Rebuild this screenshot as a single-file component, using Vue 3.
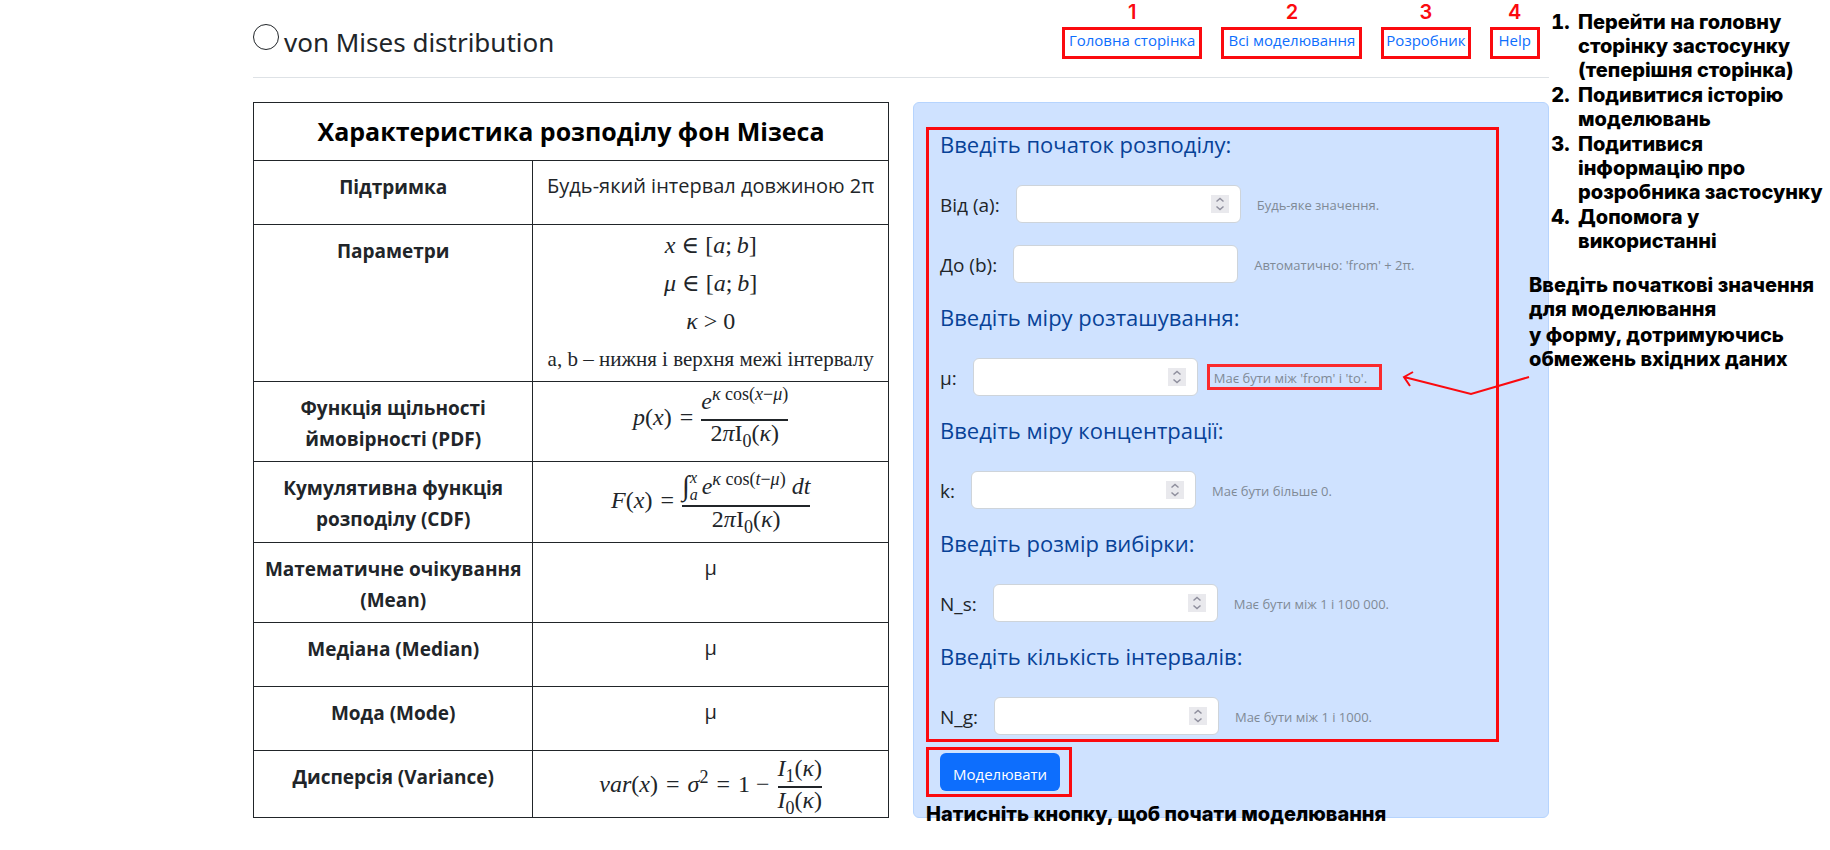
<script setup>
import { reactive } from 'vue'

const links = [
  { text: 'Головна сторінка', kind: 'regular' },
  { text: 'Всі моделювання', kind: 'regular' },
  { text: 'Розробник', kind: 'narrow' },
  { text: 'Help', kind: 'roomy' },
]

const groups = [
  {
    title: 'Введіть початок розподілу:',
    fields: [
      { id: 'from', label: 'Від (a):', hint: 'Будь-яке значення.' },
      { id: 'to', label: 'До (b):', hint: "Автоматично: 'from' + 2π.", readonly: true },
    ],
  },
  {
    title: 'Введіть міру розташування:',
    fields: [{ id: 'mu', label: 'μ:', hint: "Має бути між 'from' і 'to'.", marked: true }],
  },
  {
    title: 'Введіть міру концентрації:',
    fields: [{ id: 'kappa', label: 'k:', hint: 'Має бути більше 0.' }],
  },
  {
    title: 'Введіть розмір вибірки:',
    fields: [{ id: 'samples', label: 'N_s:', hint: 'Має бути між 1 і 100 000.' }],
  },
  {
    title: 'Введіть кількість інтервалів:',
    fields: [{ id: 'bins', label: 'N_g:', hint: 'Має бути між 1 і 1000.' }],
  },
]

const values = reactive({ from: '', to: '', mu: '', kappa: '', samples: '', bins: '' })

const navNotes = [
  'Перейти на головну сторінку застосунку (теперішня сторінка)',
  'Подивитися історію моделювань',
  'Подитивися інформацію про розробника застосунку',
  'Допомога у використанні',
]
</script>

<template>
  <div class="page">
    <div class="container">
      <header class="header">
        <div class="brand">
          <span class="logo"></span>
          <h1>von Mises distribution</h1>
        </div>
        <nav class="nav">
          <a v-for="(link, i) in links" :key="link.text" href="#" :class="link.kind">
            {{ link.text }}<span class="number">{{ i + 1 }}</span>
          </a>
        </nav>
      </header>

      <main class="columns">
        <table class="facts">
          <colgroup>
            <col class="names" />
            <col />
          </colgroup>
          <thead>
            <tr><th colspan="2">Характеристика розподілу фон Мізеса</th></tr>
          </thead>
          <tbody>
            <tr>
              <th scope="row">Підтримка</th>
              <td>Будь-який інтервал довжиною 2π</td>
            </tr>
            <tr>
              <th scope="row">Параметри</th>
              <td class="params">
                <p><i>x</i> ∈ [<i>a</i>;&thinsp;<i>b</i>]</p>
                <p><i>μ</i> ∈ [<i>a</i>;&thinsp;<i>b</i>]</p>
                <p><i>κ</i> &gt; 0</p>
                <p class="plain">a, b – нижня і верхня межі інтервалу</p>
              </td>
            </tr>
            <tr>
              <th scope="row">Функція щільності ймовірності (PDF)</th>
              <td class="math">
                <div class="formula">
                  <span><i>p</i>(<i>x</i>)</span>
                  <span>=</span>
                  <span class="fraction">
                    <span class="top"><i>e</i><sup><i>κ</i> cos(<i>x</i>−<i>μ</i>)</sup></span>
                    <span class="bottom">2<i>π</i>I<sub>0</sub>(<i>κ</i>)</span>
                  </span>
                </div>
              </td>
            </tr>
            <tr>
              <th scope="row">Кумулятивна функція розподілу (CDF)</th>
              <td class="math">
                <div class="formula">
                  <span><i>F</i>(<i>x</i>)</span>
                  <span>=</span>
                  <span class="fraction">
                    <span class="top integral">
                      <span class="sign">∫</span>
                      <span class="limits"><i>x</i><i>a</i></span>
                      <span><i>e</i><sup><i>κ</i> cos(<i>t</i>−<i>μ</i>)</sup> <i>dt</i></span>
                    </span>
                    <span class="bottom">2<i>π</i>I<sub>0</sub>(<i>κ</i>)</span>
                  </span>
                </div>
              </td>
            </tr>
            <tr>
              <th scope="row">Математичне очікування (Mean)</th>
              <td>μ</td>
            </tr>
            <tr>
              <th scope="row">Медіана (Median)</th>
              <td>μ</td>
            </tr>
            <tr>
              <th scope="row">Мода (Mode)</th>
              <td>μ</td>
            </tr>
            <tr>
              <th scope="row">Дисперсія (Variance)</th>
              <td class="math variance">
                <div class="formula">
                  <span><i>var</i>(<i>x</i>)</span>
                  <span>=</span>
                  <span><i>σ</i><sup>2</sup></span>
                  <span>=</span>
                  <span>1 −</span>
                  <span class="fraction">
                    <span class="top"><i>I</i><sub>1</sub>(<i>κ</i>)</span>
                    <span class="bottom"><i>I</i><sub>0</sub>(<i>κ</i>)</span>
                  </span>
                </div>
              </td>
            </tr>
          </tbody>
        </table>

        <form class="panel" @submit.prevent>
          <div class="outline inputs">
            <section v-for="group in groups" :key="group.title" class="group">
              <h2>{{ group.title }}</h2>
              <div v-for="field in group.fields" :key="field.id" class="row">
                <label :for="field.id">{{ field.label }}</label>
                <div class="control">
                  <input
                    :id="field.id"
                    v-model="values[field.id]"
                    :type="field.readonly ? 'text' : 'number'"
                    :readonly="field.readonly"
                  />
                  <svg v-if="!field.readonly" class="spinner" viewBox="0 0 18 18">
                    <rect width="18" height="18" fill="#e9e9ed" />
                    <path d="M5.5 6.5 9 3.5l3.5 3M5.5 11.5 9 14.5l3.5-3" fill="none" stroke="#8f8f9d" stroke-width="1.5" />
                  </svg>
                </div>
                <span class="hint" :class="{ marked: field.marked }">{{ field.hint }}</span>
              </div>
            </section>
          </div>
          <div class="outline submit">
            <button type="submit">Моделювати</button>
          </div>
          <p class="note submit-note">Натисніть кнопку, щоб почати моделювання</p>
        </form>
      </main>

      <ol class="note nav-note">
        <li v-for="text in navNotes" :key="text">{{ text }}</li>
      </ol>
      <div class="note form-note">
        <p>Введіть початкові значення для моделювання</p>
        <p>у форму, дотримуючись обмежень вхідних даних</p>
      </div>
      <svg class="arrow" viewBox="0 0 130 28">
        <path d="M129 7 71 24 4 7M13 2 4 7l6 9" fill="none" stroke="#fb0a0f" stroke-width="2" />
      </svg>
    </div>
  </div>
</template>

<style>
body {
  margin: 0;
  background: #fff;
}
</style>

<style scoped>
.page {
  padding: 0 28px 32px 0;
  color: #212529;
  font-family: "Open Sans", "Noto Sans", sans-serif;
  font-size: 20px;
}
.page * {
  box-sizing: border-box;
}
.container {
  position: relative;
  max-width: 1296px;
  margin: 0 auto;
}
h1,
h2,
p {
  margin: 0;
}

.header {
  display: flex;
  justify-content: space-between;
  align-items: flex-start;
  height: 78px;
  padding-top: 24px;
  border-bottom: 1px solid #dee2e6;
}
.brand {
  display: flex;
  align-items: flex-start;
  gap: 5px;
}
.logo {
  width: 26px;
  height: 26px;
  border: 1px solid #212529;
  border-radius: 50%;
}
h1 {
  font-family: "Noto Sans", sans-serif;
  font-size: 26px;
  font-weight: 400;
  line-height: 36px;
}
.nav {
  display: flex;
  gap: 19px;
  margin: 3px 9px 0 0;
}
.nav a {
  position: relative;
  height: 32px;
  padding: 0 4px;
  border: 3px solid #fb0a0f;
  color: #0d6efd;
  font-size: 15px;
  line-height: 21px;
  text-decoration: none;
}
.nav .narrow {
  padding: 0 2px;
}
.nav .roomy {
  padding: 0 6px;
}
.number {
  position: absolute;
  left: 0;
  right: 0;
  top: -30px;
  color: #fb0a0f;
  font: 600 20px/24px Inter, sans-serif;
  text-align: center;
}

.columns {
  display: grid;
  grid-template-columns: 1fr 1fr;
  gap: 24px;
  margin-top: 24px;
}

.facts {
  width: 100%;
  table-layout: fixed;
  border-collapse: collapse;
  text-align: center;
}
.names {
  width: 44%;
}
.facts th,
.facts td {
  height: 64px;
  padding: 9px 8px 8px;
  border: 1px solid #212529;
  line-height: 31px;
  vertical-align: top;
}
.facts tbody th {
  padding: 11px 8px 6px;
  font-size: 19px;
}
.facts thead th {
  height: 58px;
  padding: 13px 8px;
  color: #000;
  font-size: 25px;
}
.facts .params,
.facts .math {
  font-family: "Liberation Serif", "DejaVu Serif", serif;
  font-size: 24px;
}
.facts .params {
  height: 157px;
  padding: 1px 0 0;
}
.params p {
  line-height: 38px;
}
.params .plain {
  font-size: 21px;
}
.facts .math {
  padding: 7px 8px 0;
  line-height: 24px;
}
.facts .variance {
  height: 67px;
  padding-top: 5px;
}
.formula {
  display: flex;
  align-items: center;
  justify-content: center;
  gap: 8px;
}
.fraction {
  display: flex;
  flex-direction: column;
  align-items: stretch;
}
.top {
  padding-bottom: 6px;
}
.bottom {
  border-top: 2px solid #212529;
}
.math sup,
.math sub {
  font-size: 18px;
  line-height: 1px;
}
.integral {
  display: flex;
  align-items: center;
  padding-bottom: 2px;
}
.sign {
  font-size: 28px;
}
.limits {
  display: flex;
  flex-direction: column;
  margin-right: 4px;
  font-size: 16px;
  line-height: 17px;
}

.panel {
  position: relative;
  padding: 24px 49px 20px 12px;
  border: 1px solid #b6d4fe;
  border-radius: 6px;
  background: #cfe2ff;
}
.outline {
  border: 3px solid #fb0a0f;
}
.inputs {
  display: flex;
  flex-direction: column;
  gap: 20px;
  padding: 0 11px 4px;
}
.group {
  display: flex;
  flex-direction: column;
  gap: 22px;
}
h2 {
  margin-bottom: 5px;
  color: #084298;
  font-size: 22px;
  font-weight: 400;
  line-height: 28px;
}
.row {
  display: flex;
  align-items: center;
  gap: 16px;
}
.row label {
  font-size: 19px;
}
.control {
  position: relative;
  display: flex;
}
input {
  width: 225px;
  height: 38px;
  padding: 6px 36px 6px 12px;
  border: 1px solid #ced4da;
  border-radius: 6px;
  background: #fff;
  color: #212529;
  font: 16px "Open Sans", sans-serif;
  appearance: textfield;
}
.spinner {
  position: absolute;
  right: 12px;
  top: 10px;
  width: 18px;
  height: 18px;
  pointer-events: none;
}
.row label,
.hint {
  padding-top: 2px;
}
.hint {
  position: relative;
  color: #7f8a96;
  font-size: 13px;
}
.marked::before {
  content: "";
  position: absolute;
  inset: -3px -15px -3px -7px;
  border: 3px solid #fb2a2d;
}
.submit {
  width: fit-content;
  margin-top: 5px;
  padding: 3px 9px 3px 11px;
}
button {
  display: block;
  height: 38px;
  padding: 3px 13px 0;
  border: 0;
  border-radius: 6px;
  background: #0d6efd;
  color: #fff;
  font: 15px "Open Sans", sans-serif;
}

.note {
  position: absolute;
  margin: 0;
  color: #000;
  font: 800 20px/24px Inter, sans-serif;
}
.submit-note {
  left: 12px;
  bottom: -9px;
  white-space: nowrap;
}
.nav-note {
  left: 100%;
  top: 10px;
  width: 281px;
  padding-left: 26px;
}
.nav-note li {
  margin-bottom: 1px;
  padding-left: 3px;
}
.form-note {
  left: calc(100% - 20px);
  top: 273px;
  width: 290px;
}
.form-note p + p {
  margin-top: 2px;
}
.arrow {
  position: absolute;
  right: 19px;
  top: 370px;
  width: 130px;
  height: 28px;
}
</style>
